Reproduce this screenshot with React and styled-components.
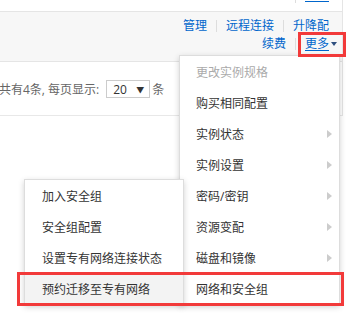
import styled, { createGlobalStyle } from "styled-components";

const GlobalStyle = createGlobalStyle`
  html, body {
    margin: 0;
    padding: 0;
    background: #fff;
  }
  body {
    font-family: "Open Sans", "Noto Sans CJK SC", sans-serif;
    font-size: 12px;
    color: #333;
  }
  ul {
    margin: 0;
    padding: 0;
    list-style: none;
  }
`;

const Page = styled.div`
  position: relative;
  width: 352px;
  height: 314px;
  overflow: hidden;
`;

const Table = styled.div`
  width: 342px;
  border-right: 1px solid #e5e5e5;
`;

// bottom edge of the row above: only the separator and the underline of "更多" show
const PrevRow = styled.div`
  height: 11px;
  display: flex;
  justify-content: flex-end;
  align-items: flex-start;
  padding-right: 13px;
`;

const PrevSep = styled.span`
  width: 1px;
  height: 3px;
  margin-right: 9px;
  background: #dddddd;
`;

const PrevUnderline = styled.span`
  width: 24px;
  height: 1px;
  margin-top: 1px;
  background: #0066cc;
`;

const HeaderRow = styled.div`
  display: flex;
  flex-direction: column;
  align-items: flex-end;
  padding: 5px 5px 8px 0;
  background: #f7f7f7;
  border-top: 1px solid #e5e5e5;
  border-bottom: 1px solid #e5e5e5;
`;

const LinkLine = styled.div`
  display: flex;
  align-items: center;
  height: 18px;
  line-height: 18px;
  margin-right: ${(p) => p.$shift || 0}px;
`;

const Link = styled.a`
  color: #0066cc;
  text-decoration: ${(p) => (p.$underline ? "underline" : "none")};
  text-underline-offset: 2px;
  white-space: nowrap;
`;

const Sep = styled.span`
  width: 1px;
  height: 12px;
  margin: 0 9px;
  background: #dddddd;
`;

const Caret = styled.span`
  width: 0;
  height: 0;
  margin-left: 2px;
  border-left: 3px solid transparent;
  border-right: 3px solid transparent;
  border-top: 4px solid #2f4f7f;
`;

const Pager = styled.div`
  display: flex;
  align-items: center;
  height: 18px;
  padding: 18px 0 17px;
  margin-left: -1px;
  color: #666;
  border-bottom: 1px solid #e8e8e8;
  white-space: nowrap;
`;

const Select = styled.div`
  box-sizing: border-box;
  width: 44px;
  height: 18px;
  margin: 0 2px 0 7px;
  padding: 0 5px 0 6px;
  display: flex;
  align-items: center;
  justify-content: space-between;
  border: 1px solid #cccccc;
  color: #333;
`;

const SelectArrow = styled.span`
  font-size: 8px;
  color: #333;
`;

const Menu = styled.ul`
  position: absolute;
  box-sizing: border-box;
  background: #fff;
  border: 1px solid #dddddd;
  box-shadow: 0 2px 6px rgba(0, 0, 0, 0.18);
`;

const MainMenu = styled(Menu)`
  left: 179px;
  top: 55px;
  width: 161px;
  z-index: 2;
`;

const SubMenu = styled(Menu)`
  left: 24px;
  top: 179px;
  width: 160px;
  z-index: 3;
`;

const MenuItem = styled.li`
  display: flex;
  align-items: center;
  justify-content: space-between;
  height: 31px;
  padding: 0 7px 0 ${(p) => p.$indent || 16}px;
  color: ${(p) => (p.$disabled ? "#aaaaaa" : "#333333")};
  background: ${(p) => (p.$active ? "#f3f3f3" : "#ffffff")};
  white-space: nowrap;
`;

const SubArrow = styled.span`
  width: 0;
  height: 0;
  border-top: 4px solid transparent;
  border-bottom: 4px solid transparent;
  border-left: 5px solid #cccccc;
`;

const Callout = styled.div`
  position: absolute;
  box-sizing: border-box;
  border: 3px solid #f23a3a;
  pointer-events: none;
  z-index: 5;
`;

const MoreCallout = styled(Callout)`
  left: 298px;
  top: 32px;
  width: 48px;
  height: 25px;
`;

const ItemCallout = styled(Callout)`
  left: 17px;
  top: 272px;
  width: 327px;
  height: 34px;
`;

const mainItems = [
  { label: "更改实例规格", disabled: true },
  { label: "购买相同配置" },
  { label: "实例状态", sub: true },
  { label: "实例设置", sub: true },
  { label: "密码/密钥", sub: true },
  { label: "资源变配", sub: true },
  { label: "磁盘和镜像", sub: true },
  { label: "网络和安全组" },
];

const subItems = [
  { label: "加入安全组" },
  { label: "安全组配置" },
  { label: "设置专有网络连接状态" },
  { label: "预约迁移至专有网络", active: true },
];

const App = () => {
  return (
    <Page>
      <GlobalStyle />
      <Table>
        <PrevRow>
          <PrevSep />
          <PrevUnderline />
        </PrevRow>
        <HeaderRow>
          <LinkLine $shift={8}>
            <Link>管理</Link>
            <Sep />
            <Link>远程连接</Link>
            <Sep />
            <Link>升降配</Link>
          </LinkLine>
          <LinkLine>
            <Link>续费</Link>
            <Sep />
            <Link $underline>更多</Link>
            <Caret />
          </LinkLine>
        </HeaderRow>
        <Pager>
          共有4条, 每页显示:
          <Select>
            20
            <SelectArrow>▼</SelectArrow>
          </Select>
          条
        </Pager>
      </Table>

      <MainMenu>
        {mainItems.map((item) => (
          <MenuItem key={item.label} $disabled={item.disabled}>
            {item.label}
            {item.sub && <SubArrow />}
          </MenuItem>
        ))}
      </MainMenu>

      <SubMenu>
        {subItems.map((item) => (
          <MenuItem key={item.label} $indent={17} $active={item.active}>
            {item.label}
          </MenuItem>
        ))}
      </SubMenu>

      <MoreCallout />
      <ItemCallout />
    </Page>
  );
};

export default App;
